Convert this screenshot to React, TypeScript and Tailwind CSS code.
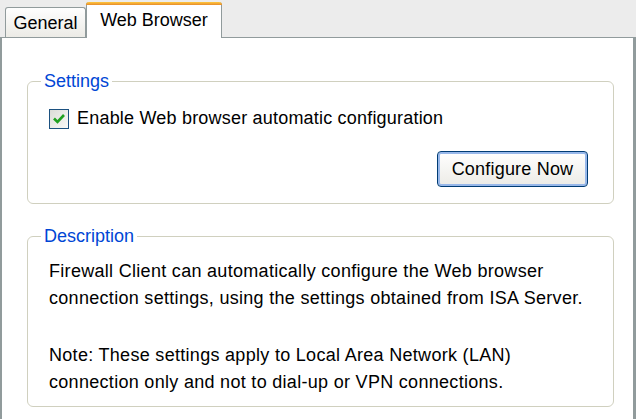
import React from "react";

export default function App() {
  const font = { fontFamily: '"Liberation Sans", Arial, sans-serif' };
  return (
    <div className="w-[636px] h-[419px] bg-[#ececec] overflow-hidden flex flex-col" style={font}>
      <div className="h-[37px] flex items-end pl-[5px] shrink-0">
        <div className="h-[30px] w-[81px] border border-b-0 border-[#919b9c] rounded-t-[3px] bg-gradient-to-b from-[#fefefe] to-[#ecebe6] flex items-center justify-center text-[18px] text-black pt-[2px]">
          General
        </div>
        <div className="h-[36px] w-[136px] -mb-[1px] relative z-10 border-x border-[#919b9c] rounded-t-[3px] bg-white flex flex-col">
          <div className="h-[3px] rounded-t-[3px] bg-gradient-to-b from-[#ffc83c] to-[#e68b2c] -mx-[1px]" />
          <div className="flex-1 flex items-center justify-center text-[18px] text-black -mt-[2px]">
            Web Browser
          </div>
        </div>
      </div>
      <div className="flex-1 bg-white border-t border-l-2 border-r-[3px] border-[#919b9c] pl-[25px] pr-[19px] pt-[33px]">
        <fieldset className="border border-[#d0d0bf] rounded-[6px] h-[133px] px-[21px] pb-[14px] m-0 min-w-0 flex flex-col">
          <legend className="px-[3px] -ml-[8px] text-[18px] text-[#0046d5] leading-[20px]">Settings</legend>
          <div className="flex items-center mt-[14px]">
            <div className="w-[20px] h-[20px] border border-[#1c5180] bg-gradient-to-br from-[#dcdcd7] to-[#fafaf8] flex items-center justify-center">
              <svg width="14" height="14" viewBox="0 0 14 14">
                <path d="M2 6.5 L5.5 10 L12 3" stroke="#21a121" strokeWidth="2.6" fill="none" />
              </svg>
            </div>
            <span className="ml-[8px] text-[18px] text-black tracking-[0.2px]">Enable Web browser automatic configuration</span>
          </div>
          <div className="flex justify-end mt-[19px] pr-[4px]">
            <button className="w-[151px] h-[36px] border border-[#003c74] rounded-[4px] bg-gradient-to-b from-[#ffffff] to-[#ecebe6] shadow-[inset_0_0_0_2px_#98b8ea] text-[18px] text-black tracking-[0.2px] flex items-center justify-center">
              Configure Now
            </button>
          </div>
        </fieldset>
        <fieldset className="border border-[#d0d0bf] rounded-[6px] h-[181px] mt-[22px] px-[21px] m-0 min-w-0">
          <legend className="px-[3px] -ml-[8px] text-[18px] text-[#0046d5] leading-[20px]">Description</legend>
          <div className="text-[18px] text-black leading-[27px] mt-[12px] tracking-[0.3px]">
            <p>Firewall Client can automatically configure the Web browser</p>
            <p>connection settings, using the settings obtained from ISA Server.</p>
            <p className="mt-[30px]">Note: These settings apply to Local Area Network (LAN)</p>
            <p>connection only and not to dial-up or VPN connections.</p>
          </div>
        </fieldset>
      </div>
    </div>
  );
}
